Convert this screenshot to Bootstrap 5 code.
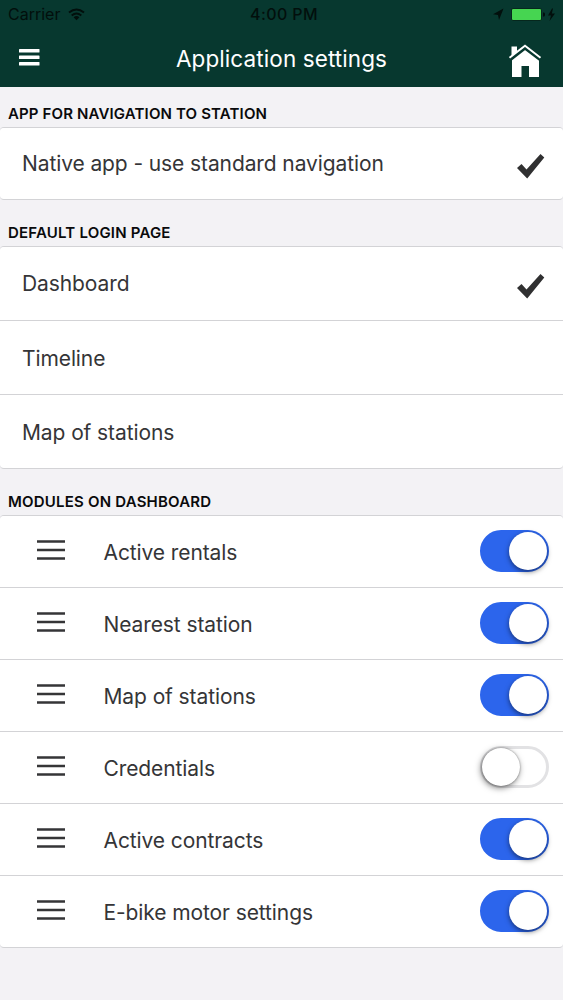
<!DOCTYPE html>
<html lang="en">
<head>
<meta charset="utf-8">
<meta name="viewport" content="width=device-width, initial-scale=1">
<title>Application settings</title>
<link rel="stylesheet" href="https://cdn.jsdelivr.net/npm/bootstrap@5.3.0/dist/css/bootstrap.min.css">
<style>
body{background:#f3f2f5;font-family:Inter,sans-serif;color:#353537;min-height:1000px;overflow:hidden}
.topbar{background:#07382f;height:87px}
.status{height:29px;color:#020f0c;font-size:16px;line-height:29px}
.status .clock{font-weight:500;letter-spacing:.4px;padding-left:5px}
.titlebar{height:58px}
.titlebar h1{font-size:22.5px;font-weight:400;line-height:57px;letter-spacing:.1px}
.section-title{height:40px;padding:13px 8px 0;font-size:15px;font-weight:600;line-height:27px;color:#0a0a0c;letter-spacing:.2px}
.section-title.lead-title{letter-spacing:.14px}
.section-title.tall{height:46px;padding-top:19px;line-height:28px}
.settings{--bs-list-group-border-color:#d3d3d6;--bs-list-group-color:#353537;--bs-list-group-bg:#fff;border-radius:4px;border-top:1px solid #d3d3d6}
.settings .list-group-item{height:72px;padding:1px 14px 0 22px;border-width:0 0 1px;border-color:#d3d3d6;font-size:21px;letter-spacing:-.1px;line-height:30px}
.settings.pages .list-group-item{height:74px}
.settings.pages .list-group-item + .list-group-item{padding-top:2px}
.settings .tick{margin:6px 4px 0 0}
.modules .list-group-item{padding-left:37px}
.modules .drag{margin-right:39px;margin-top:-4px;margin-left:-.5px}
.modules .list-group-item>span{margin-top:1px}
.switch.form-check-input{width:69px;height:42px;margin:-3px 0 0;border:3px solid #e2e2e4;border-radius:21px;background:#fff;position:relative;box-shadow:none}
.switch::after{content:"";position:absolute;left:-1px;top:-1px;width:38px;height:38px;border-radius:50%;background:#fff;box-shadow:0 2px 5px rgba(0,0,0,.5)}
.switch.form-check-input:not(:checked)::after{box-shadow:-1px 2px 6px rgba(0,0,0,.5),0 0 2px rgba(0,0,0,.4)}
.switch.form-check-input:checked{background:#2c65ec;border-color:#2c65ec}
.switch:checked::after{left:26px}
</style>
</head>
<body>
<header class="topbar">
  <div class="status d-flex align-items-center position-relative px-2">
    <span class="carrier">Carrier</span>
    <svg class="ms-2" width="17" height="13" viewBox="0 0 17 13" fill="none" stroke="#020f0c" stroke-width="2"><path d="M1 4.600Q8.500-1.600 16 4.600M3.700 7.500Q8.500 3.500 13.300 7.500"/><path d="M5.600 9.200Q8.500 6.900 11.400 9.200L8.500 12.300Z" fill="#020f0c" stroke="none"/></svg>
    <span class="clock position-absolute start-50 translate-middle-x text-nowrap">4:00 PM</span>
    <svg class="ms-auto" style="margin-right:-2px" width="64" height="14" viewBox="0 0 64 14"><path d="M10.500 .5 0 6.300 5 7 6 12Z" fill="#020f0c"/><rect x="18.500" y=".5" width="30" height="12" rx="1.500" fill="#46d551" stroke="#06271d"/><path d="M50 4.500h1q1 0 1 2t-1 2h-1Z" fill="#020f0c"/><path d="M59 .5 55 7.500h3L56.500 13 62 5.500h-3.200L60 .5Z" fill="#020f0c"/></svg>
  </div>
  <div class="titlebar d-flex align-items-center justify-content-between position-relative">
    <svg class="ms-3" style="margin-top:-2px" width="26" height="20" viewBox="0 0 26 20" fill="#fff"><rect x="3" y="2" width="20.500" height="3.500" rx=".6"/><rect x="3" y="8.500" width="20.500" height="3.500" rx=".6"/><rect x="3" y="15" width="20.500" height="3.500" rx=".6"/></svg>
    <h1 class="m-0 text-white position-absolute start-50 translate-middle-x text-nowrap">Application settings</h1>
    <svg style="margin-right:21px;margin-top:5px" width="34" height="34" viewBox="0 0 34 34"><path d="M4 33V15L17 4.500 31 15V33H21V22H13.500V33Z" fill="#fff"/><path d="M3.500 2.500H9V10L3.500 14Z" fill="#fff"/><path d="M2 15.500 17 3.800 32.500 15.500" fill="none" stroke="#07382f" stroke-width="3.600"/><path d="M1.500 13.700 17 1.800 32.500 13.700" fill="none" stroke="#fff" stroke-width="2"/></svg>
  </div>
</header>
<main>
  <h2 class="section-title lead-title m-0">APP FOR NAVIGATION TO STATION</h2>
  <ul class="list-group settings">
    <li class="list-group-item d-flex align-items-center justify-content-between"><span>Native app - use standard navigation</span><svg class="tick" width="28" height="26" viewBox="0 0 28 26"><path d="M0 14 4.500 10 9.500 15.500 23.500 0 27.300 3.500 10.200 24.500Z" fill="#303031"/></svg></li>
  </ul>
  <h2 class="section-title tall m-0">DEFAULT LOGIN PAGE</h2>
  <ul class="list-group settings pages">
    <li class="list-group-item d-flex align-items-center justify-content-between"><span>Dashboard</span><svg class="tick" width="28" height="26" viewBox="0 0 28 26"><path d="M0 14 4.500 10 9.500 15.500 23.500 0 27.300 3.500 10.200 24.500Z" fill="#303031"/></svg></li>
    <li class="list-group-item d-flex align-items-center"><span>Timeline</span></li>
    <li class="list-group-item d-flex align-items-center"><span>Map of stations</span></li>
  </ul>
  <h2 class="section-title tall m-0">MODULES ON DASHBOARD</h2>
  <ul class="list-group settings modules">
    <li class="list-group-item d-flex align-items-center"><svg class="drag" width="28" height="22" viewBox="0 0 28 22" stroke="#353537" stroke-width="2.400"><path d="M0 2.500H28M0 11H28M0 19.500H28"/></svg><span>Active rentals</span><input class="form-check-input switch ms-auto" type="checkbox" role="switch" aria-label="Active rentals" checked></li>
    <li class="list-group-item d-flex align-items-center"><svg class="drag" width="28" height="22" viewBox="0 0 28 22" stroke="#353537" stroke-width="2.400"><path d="M0 2.500H28M0 11H28M0 19.500H28"/></svg><span>Nearest station</span><input class="form-check-input switch ms-auto" type="checkbox" role="switch" aria-label="Nearest station" checked></li>
    <li class="list-group-item d-flex align-items-center"><svg class="drag" width="28" height="22" viewBox="0 0 28 22" stroke="#353537" stroke-width="2.400"><path d="M0 2.500H28M0 11H28M0 19.500H28"/></svg><span>Map of stations</span><input class="form-check-input switch ms-auto" type="checkbox" role="switch" aria-label="Map of stations" checked></li>
    <li class="list-group-item d-flex align-items-center"><svg class="drag" width="28" height="22" viewBox="0 0 28 22" stroke="#353537" stroke-width="2.400"><path d="M0 2.500H28M0 11H28M0 19.500H28"/></svg><span>Credentials</span><input class="form-check-input switch ms-auto" type="checkbox" role="switch" aria-label="Credentials"></li>
    <li class="list-group-item d-flex align-items-center"><svg class="drag" width="28" height="22" viewBox="0 0 28 22" stroke="#353537" stroke-width="2.400"><path d="M0 2.500H28M0 11H28M0 19.500H28"/></svg><span>Active contracts</span><input class="form-check-input switch ms-auto" type="checkbox" role="switch" aria-label="Active contracts" checked></li>
    <li class="list-group-item d-flex align-items-center"><svg class="drag" width="28" height="22" viewBox="0 0 28 22" stroke="#353537" stroke-width="2.400"><path d="M0 2.500H28M0 11H28M0 19.500H28"/></svg><span>E-bike motor settings</span><input class="form-check-input switch ms-auto" type="checkbox" role="switch" aria-label="E-bike motor settings" checked></li>
  </ul>
</main>
<script src="https://cdn.jsdelivr.net/npm/bootstrap@5.3.0/dist/js/bootstrap.bundle.min.js"></script>
</body>
</html>
